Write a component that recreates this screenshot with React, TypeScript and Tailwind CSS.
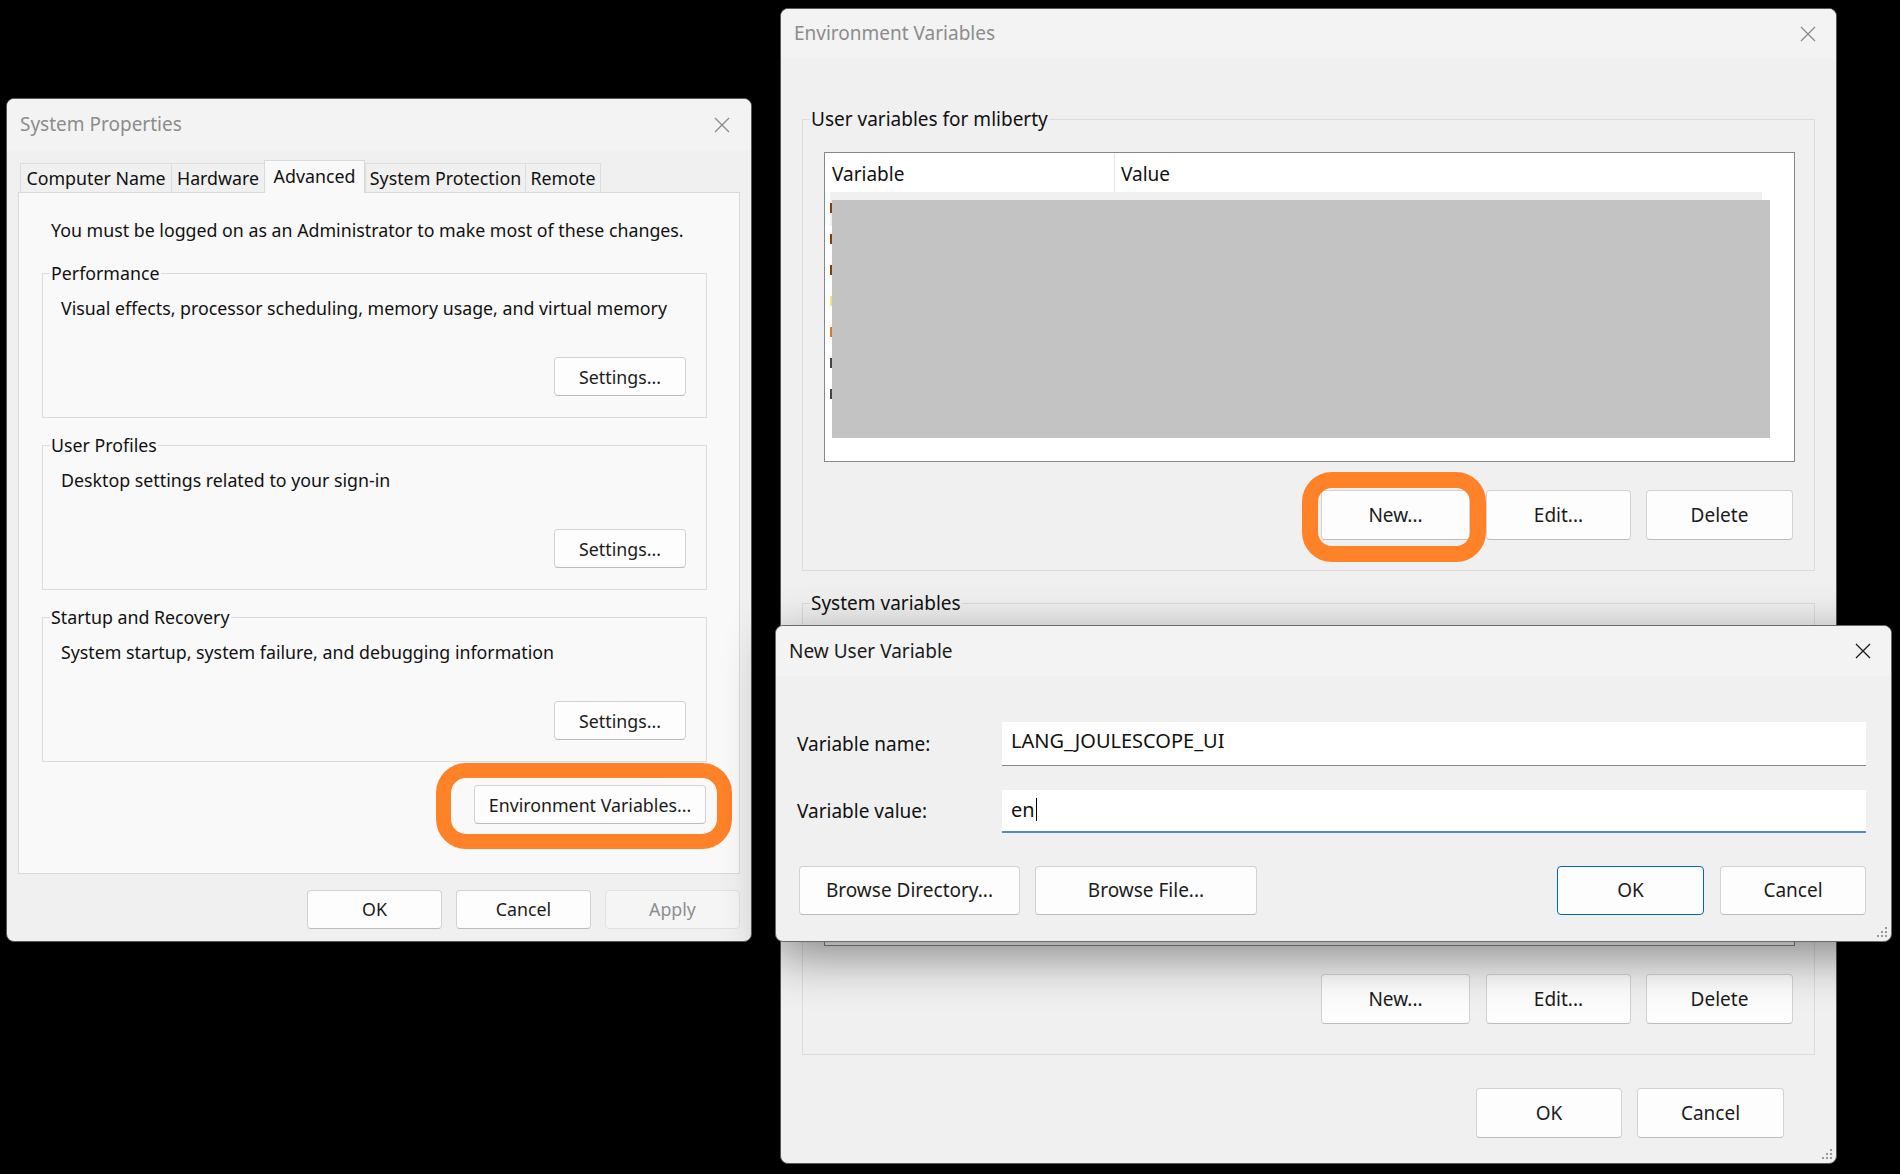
import React from 'react';

const CloseIcon = ({ color = '#8a8a8a' }: { color?: string }) => (
  <svg width="16" height="16" viewBox="0 0 16 16" fill="none">
    <path d="M1 1L15 15M15 1L1 15" stroke={color} strokeWidth="1.3" />
  </svg>
);

const Grip = () => (
  <svg width="11" height="11" viewBox="0 0 11 11" fill="#9a9a9a">
    <rect x="8" y="0" width="2" height="2" />
    <rect x="4" y="4" width="2" height="2" />
    <rect x="8" y="4" width="2" height="2" />
    <rect x="0" y="8" width="2" height="2" />
    <rect x="4" y="8" width="2" height="2" />
    <rect x="8" y="8" width="2" height="2" />
  </svg>
);

type BtnProps = {
  children: React.ReactNode;
  className?: string;
  disabled?: boolean;
  primary?: boolean;
};

const Btn = ({ children, className = '', disabled, primary }: BtnProps) => {
  let look = 'border-[#d2d2d2] border-b-[#bcbcbc] bg-[#fdfdfd] text-[#1b1b1b]';
  if (disabled) look = 'border-[#e2e2e2] bg-[#f5f5f5] text-[#8d8d8d]';
  if (primary) look = 'border-[#0067c0] bg-[#fdfdfd] text-[#1b1b1b]';
  return (
    <div className={`flex shrink-0 items-center justify-center rounded-[4px] border ${look} ${className}`}>
      {children}
    </div>
  );
};

// orange annotation ring drawn over a button
const Ring = ({ className = '' }: { className?: string }) => (
  <div className={`pointer-events-none absolute rounded-[30px] border-[#ff8128] ${className}`} />
);

const Group = ({ label, className = '', children }: { label: string; className?: string; children: React.ReactNode }) => (
  <fieldset className={`border border-[#dcdcdc] ${className}`}>
    <legend className="ml-[7px] px-[1px]">{label}</legend>
    {children}
  </fieldset>
);

const SettingsGroup = ({ label, text }: { label: string; text: string }) => (
  <Group label={label} className="mt-[15px] h-[157px] w-[665px] leading-[24px]">
    <p className="mt-[11px] pl-[18px]">{text}</p>
    <div className="mt-[37px] flex justify-end pr-[20px]">
      <Btn className="h-[39px] w-[132px]">Settings...</Btn>
    </div>
  </Group>
);

const tabs = [
  { name: 'Computer Name', w: 'w-[151px]' },
  { name: 'Hardware', w: 'w-[93px]' },
  { name: 'Advanced', w: 'w-[101px]', active: true },
  { name: 'System Protection', w: 'w-[160px]' },
  { name: 'Remote', w: 'w-[76px]' },
];

const SystemProperties = () => (
  <div className="absolute left-[6px] top-[98px] flex h-[844px] w-[746px] flex-col overflow-hidden rounded-[8px] border border-[#585858] bg-[#f0f0f0] text-[17.8px] text-[#111]">
    <div className="flex h-[51px] shrink-0 items-center justify-between bg-[#f3f3f3] pl-[13px] pr-[21px]">
      <span className="text-[19px] text-[#8c8c8c]">System Properties</span>
      <CloseIcon />
    </div>

    <div className="px-[11px]">
      <div className="mt-[11px] flex h-[31px] items-end pl-[2px]">
        {tabs.map((t) =>
          t.active ? (
            <div
              key={t.name}
              className={`relative z-10 -mb-[1px] flex h-[33px] items-start justify-center border border-b-0 border-[#d9d9d9] bg-[#f9f9f9] pt-[2px] ${t.w}`}
            >
              {t.name}
            </div>
          ) : (
            <div
              key={t.name}
              className={`flex h-[29px] items-center justify-center border border-b-0 border-r-0 border-[#dedede] bg-[#f0f0f0] last:border-r ${t.w}`}
            >
              {t.name}
            </div>
          )
        )}
      </div>

      <div className="h-[682px] w-[722px] border border-[#d9d9d9] bg-[#f9f9f9] pl-[23px] pt-[25px] leading-[24px]">
        <p className="pl-[9px]">You must be logged on as an Administrator to make most of these changes.</p>
        <div className="h-[4px]" />
        <SettingsGroup label="Performance" text="Visual effects, processor scheduling, memory usage, and virtual memory" />
        <SettingsGroup label="User Profiles" text="Desktop settings related to your sign-in" />
        <SettingsGroup label="Startup and Recovery" text="System startup, system failure, and debugging information" />
        <div className="mt-[23px] flex w-[665px] justify-end pr-[1px]">
          <div className="relative">
            <Btn className="h-[39px] w-[232px]">Environment Variables...</Btn>
            <Ring className="-bottom-[25px] -left-[38px] -right-[26px] -top-[22px] border-[15px]" />
          </div>
        </div>
      </div>

      <div className="mt-[16px] flex justify-end gap-[14px]">
        <Btn className="h-[39px] w-[135px]">OK</Btn>
        <Btn className="h-[39px] w-[135px]">Cancel</Btn>
        <Btn className="h-[39px] w-[135px]" disabled>
          Apply
        </Btn>
      </div>
    </div>
  </div>
);

const peeks = ['#8a3b12', '#8a3b12', '#8a3b12', '#f1e27a', '#d7772a', '#444', '#444'];

const VarList = ({ header }: { header?: boolean }) => (
  <div className="relative ml-[21px] h-[310px] w-[971px] border border-[#828790] bg-white">
    {header && (
      <>
        <div className="flex h-[39px] w-[937px] items-center">
          <div className="flex h-full w-[290px] items-center border-r border-[#e5e5e5] pl-[7px] pt-[4px]">Variable</div>
          <div className="pl-[6px] pt-[4px]">Value</div>
        </div>
        <div className="ml-[5px] h-[34px] w-[932px] bg-[#f0f0f0]" />
        <div className="absolute left-[5px] top-[50px] flex flex-col gap-[21px]">
          {peeks.map((c, i) => (
            <div key={i} className="h-[10px] w-[2px]" style={{ backgroundColor: c }} />
          ))}
        </div>
        <div className="absolute left-[7px] top-[47px] h-[238px] w-[938px] bg-[#c3c3c3]" />
      </>
    )}
  </div>
);

const VarButtons = ({ ring }: { ring?: boolean }) => (
  <div className="mt-[28px] flex justify-end pr-[21px]">
    <div className="relative">
      <Btn className="h-[50px] w-[149px]">New...</Btn>
      {ring && <Ring className="-bottom-[22px] -left-[19px] -right-[16px] -top-[18px] border-[16px]" />}
    </div>
    <Btn className="ml-[16px] h-[50px] w-[145px]">Edit...</Btn>
    <Btn className="ml-[15px] h-[50px] w-[147px]">Delete</Btn>
  </div>
);

const EnvironmentVariables = () => (
  <div className="absolute left-[780px] top-[8px] flex h-[1156px] w-[1057px] flex-col overflow-hidden rounded-[8px] border border-[#585858] bg-[#f0f0f0] text-[19px] text-[#111]">
    <div className="flex h-[49px] shrink-0 items-center justify-between bg-[#f3f3f3] pl-[13px] pr-[20px]">
      <span className="text-[#8c8c8c]">Environment Variables</span>
      <CloseIcon />
    </div>
    <div className="px-[21px] leading-[27px]">
      <Group label="User variables for mliberty" className="mt-[48px] h-[465px] w-[1013px]">
        <div className="h-[19px]" />
        <VarList header />
        <VarButtons ring />
      </Group>
      <Group label="System variables" className="mt-[19px] h-[465px] w-[1013px]">
        <div className="h-[19px]" />
        <VarList />
        <VarButtons />
      </Group>
      <div className="mt-[33px] flex justify-end pr-[31px]">
        <Btn className="h-[50px] w-[146px]">OK</Btn>
        <Btn className="ml-[15px] h-[50px] w-[147px]">Cancel</Btn>
      </div>
    </div>
    <div className="absolute bottom-[3px] right-[3px]">
      <Grip />
    </div>
  </div>
);

const NewUserVariable = () => (
  <div className="absolute left-[775px] top-[625px] flex h-[317px] w-[1117px] flex-col rounded-[8px] border border-[#6a6a6a] bg-[#f0f0f0] text-[19px] text-[#111] shadow-[0_14px_50px_rgba(0,0,0,0.45)]">
    <div className="flex h-[50px] shrink-0 items-center justify-between rounded-t-[8px] bg-[#f3f3f3] pl-[13px] pr-[20px]">
      <span className="text-[#1b1b1b]">New User Variable</span>
      <CloseIcon color="#1b1b1b" />
    </div>
    <div className="pl-[21px] pr-[25px]">
      <div className="mt-[46px] flex items-center">
        <div className="w-[205px]">Variable name:</div>
        <div className="flex h-[44px] w-[864px] items-center border-b border-[#868686] bg-white pb-[5px] pl-[9px] text-[20px]">
          LANG_JOULESCOPE_UI
        </div>
      </div>
      <div className="mt-[24px] flex items-center">
        <div className="w-[205px]">Variable value:</div>
        <div className="flex h-[43px] w-[864px] items-center border-b-2 border-[#4d8cc8] bg-white pb-[2px] pl-[9px] text-[20px]">
          en
          <span className="ml-[1px] h-[23px] w-[1px] bg-black" />
        </div>
      </div>
      <div className="mt-[33px] flex items-center pl-[2px]">
        <Btn className="h-[49px] w-[221px]">Browse Directory...</Btn>
        <Btn className="ml-[15px] h-[49px] w-[222px]">Browse File...</Btn>
        <div className="flex-1" />
        <Btn className="h-[49px] w-[147px]" primary>
          OK
        </Btn>
        <Btn className="ml-[16px] h-[49px] w-[146px]">Cancel</Btn>
      </div>
    </div>
    <div className="absolute bottom-[3px] right-[3px]">
      <Grip />
    </div>
  </div>
);

const App = () => {
  return (
    <div className="relative h-[1174px] w-[1900px] overflow-hidden bg-black font-['Noto_Sans',sans-serif]">
      <SystemProperties />
      <EnvironmentVariables />
      <NewUserVariable />
    </div>
  );
};

export default App;
